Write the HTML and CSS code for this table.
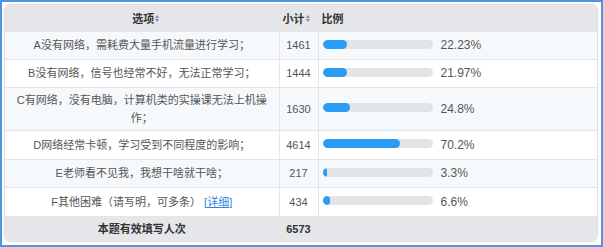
FILE: index.html
```html
<!DOCTYPE html>
<html lang="zh-CN">
<head>
<meta charset="utf-8">
<title>统计</title>
<link rel="stylesheet" href="styles.css">
</head>
<body>
<div class="frame">
  <div class="card">
    <table class="stats">
      <colgroup>
        <col class="c-opt">
        <col class="c-num">
        <col class="c-ratio">
      </colgroup>
      <thead>
        <tr class="head">
          <th class="opt">选项<span class="sort"><i class="up"></i><i class="down"></i></span></th>
          <th class="num">小计<span class="sort"><i class="up"></i><i class="down"></i></span></th>
          <th class="ratio">比例</th>
        </tr>
      </thead>
      <tbody>
        <tr class="odd h28">
          <td class="opt">A没有网络，需耗费大量手机流量进行学习；</td>
          <td class="num">1461</td>
          <td class="ratio"><div class="bar"><span class="fill" style="width:22.23%"></span></div><span class="pct">22.23%</span></td>
        </tr>
        <tr class="h28">
          <td class="opt">B没有网络，信号也经常不好，无法正常学习；</td>
          <td class="num">1444</td>
          <td class="ratio"><div class="bar"><span class="fill" style="width:21.97%"></span></div><span class="pct">21.97%</span></td>
        </tr>
        <tr class="odd h43">
          <td class="opt">C有网络，没有电脑，计算机类的实操课无法上机操作；</td>
          <td class="num">1630</td>
          <td class="ratio"><div class="bar"><span class="fill" style="width:24.8%"></span></div><span class="pct">24.8%</span></td>
        </tr>
        <tr class="h29">
          <td class="opt">D网络经常卡顿，学习受到不同程度的影响；</td>
          <td class="num">4614</td>
          <td class="ratio"><div class="bar"><span class="fill" style="width:70.2%"></span></div><span class="pct">70.2%</span></td>
        </tr>
        <tr class="odd h28">
          <td class="opt">E老师看不见我，我想干啥就干啥；</td>
          <td class="num">217</td>
          <td class="ratio"><div class="bar"><span class="fill" style="width:3.3%"></span></div><span class="pct">3.3%</span></td>
        </tr>
        <tr class="h29">
          <td class="opt">F其他困难（请写明，可多条） <a class="link" href="#">[详细]</a></td>
          <td class="num">434</td>
          <td class="ratio"><div class="bar"><span class="fill" style="width:6.6%"></span></div><span class="pct">6.6%</span></td>
        </tr>
      </tbody>
      <tfoot>
        <tr class="foot">
          <td class="opt">本题有效填写人次</td>
          <td class="num">6573</td>
          <td class="ratio"></td>
        </tr>
      </tfoot>
    </table>
  </div>
</div>
</body>
</html>
```
FILE: styles.css
```css
html, body {
  margin: 0;
  padding: 0;
  background: #ffffff;
}
.frame {
  width: 603px;
  height: 247px;
  box-sizing: border-box;
  border: 2px solid #4f96dc;
  padding: 2px 3px 3px 2px;
  background: #ffffff;
  overflow: hidden;
}
.card {
  width: 594px;
  height: 238px;
  box-sizing: border-box;
  border: 1px solid #dcdfe3;
  border-radius: 6px;
  overflow: hidden;
  box-shadow: 0 0 2px rgba(0,0,0,0.08);
}
.stats {
  width: 100%;
  border-collapse: collapse;
  table-layout: fixed;
  font-family: "Liberation Sans", "Noto Sans CJK SC", sans-serif;
  font-size: 11px;
  color: #555555;
}
.c-opt { width: 274px; }
.c-num { width: 39px; }
.stats th, .stats td {
  padding: 0;
  border-left: 1px solid #e3e5e8;
  border-bottom: 1px solid #e3e5e8;
  vertical-align: middle;
  overflow: hidden;
}
.stats th:first-child, .stats td:first-child { border-left: none; }
.head {
  height: 26px;
  background: #e4e6ea;
}
.head th {
  font-weight: bold;
  color: #333333;
  font-size: 11px;
}
.head th.opt { text-align: center; padding-left: 8px; }
.head th.num { text-align: left; padding-left: 3px; }
.head th.ratio { text-align: left; padding-left: 3px; }
.sort {
  display: inline-flex;
  flex-direction: column;
  gap: 1px;
  margin-left: 1px;
  vertical-align: middle;
  position: relative;
  top: -1px;
}
.sort i {
  display: block;
  width: 0;
  height: 0;
  border-left: 2.5px solid transparent;
  border-right: 2.5px solid transparent;
}
.sort .up { border-bottom: 3px solid #8a8f96; }
.sort .down { border-top: 3px solid #8a8f96; }
.odd { background: #f6f9fc; }
.h28 { height: 28px; }
.h29 { height: 29px; }
.h43 { height: 43px; }
td.opt {
  text-align: center;
  padding: 0 11px;
  line-height: 18px;
}
td.num { text-align: center; }
td.ratio { padding-left: 4px; white-space: nowrap; }
.bar {
  display: inline-block;
  vertical-align: middle;
  width: 110px;
  height: 9px;
  border-radius: 5px;
  background: #e3e4e6;
  overflow: hidden;
  position: relative;
  top: -1px;
}
.fill {
  display: block;
  height: 100%;
  min-width: 4px;
  background: #2a9cf3;
  border-radius: 5px;
}
.pct {
  display: inline-block;
  margin-left: 8px;
  vertical-align: middle;
  font-size: 12px;
}
.link {
  color: #2f86dd;
  text-decoration: underline;
}
.foot {
  height: 25px;
  background: #e4e6ea;
}
.foot td {
  font-weight: bold;
  color: #333333;
  border-bottom: none;
}
```
